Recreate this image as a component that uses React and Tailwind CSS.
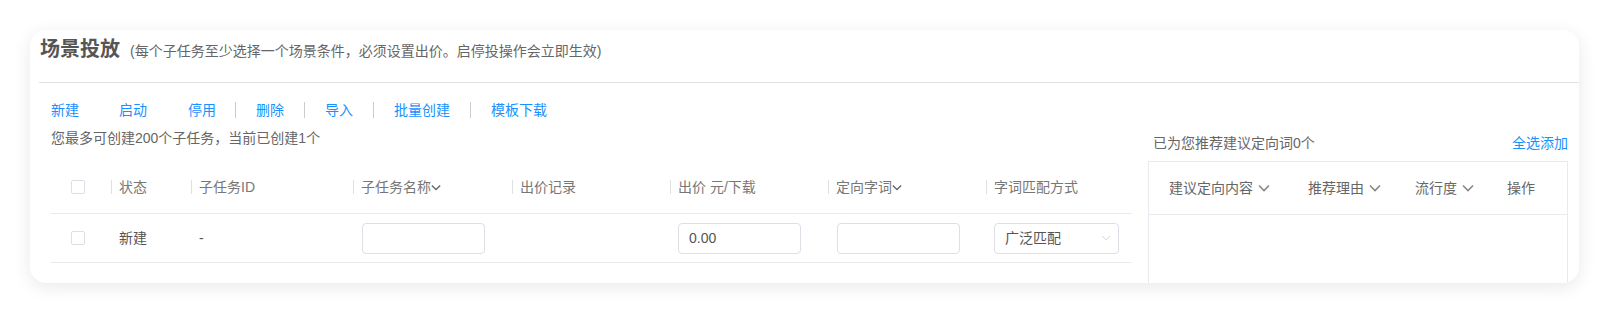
import React from "react";

const FONT = {
  fontFamily: '"Liberation Sans", "Noto Sans CJK SC", sans-serif',
};

const Chevron = ({ className = "", stroke = "#666", width = 1.4 }) => (
  <svg viewBox="0 0 12 8" className={className} fill="none">
    <path d="M1 1.5 L6 6.5 L11 1.5" stroke={stroke} strokeWidth={width} />
  </svg>
);

const Checkbox = () => (
  <span className="block w-[14px] h-[14px] border border-[#dcdfe6] rounded-[2px] bg-white" />
);

// column widths of the sub-task table, first one holds the checkbox
const columns = [
  { key: "check", width: "w-[60px]" },
  { key: "status", width: "w-[80px]", title: "状态" },
  { key: "id", width: "w-[162px]", title: "子任务ID" },
  { key: "name", width: "w-[159px]", title: "子任务名称", sort: true },
  { key: "history", width: "w-[158px]", title: "出价记录" },
  { key: "price", width: "w-[158px]", title: "出价 元/下载" },
  { key: "words", width: "w-[158px]", title: "定向字词", sort: true },
  { key: "match", width: "flex-1", title: "字词匹配方式" },
];

const actions = [
  { label: "新建", sep: false, pad: "pr-[19px]" },
  { label: "启动", sep: false, pad: "px-[20px]" },
  { label: "停用", sep: true, pad: "pl-[20px] pr-[19px]" },
  { label: "删除", sep: true, pad: "px-[20px]" },
  { label: "导入", sep: true, pad: "px-[20px]" },
  { label: "批量创建", sep: true, pad: "px-[20px]" },
  { label: "模板下载", sep: false, pad: "px-[20px]" },
];

const TextInput = ({ value = "" }) => (
  <div className="w-[123px] h-[31px] border border-[#dcdfe6] rounded-[4px] bg-white flex items-center pl-[10px] text-[14px] text-[#555]">
    {value}
  </div>
);

const App = () => {
  return (
    <div className="w-full h-[314px] bg-white pt-[30px] pl-[30px]" style={FONT}>
      <div className="w-[1549px] h-[253px] bg-white rounded-[16px] shadow-[0_4px_18px_rgba(0,0,0,0.09)] overflow-hidden">
        {/* header */}
        <div className="ml-[9px] h-[53px] border-b border-[#e2e2e2] pt-[5px] pl-px flex items-baseline">
          <span className="text-[20px] leading-[28px] font-bold text-[#555]">场景投放</span>
          <span className="ml-[10px] text-[14px] text-[#666]">
            (每个子任务至少选择一个场景条件，必须设置出价。启停投操作会立即生效)
          </span>
        </div>

        <div className="pl-[21px] pr-[11px] flex gap-[16px]">
          {/* left: toolbar + tasks table */}
          <div className="flex-1 min-w-0">
            <div className="mt-[17px] h-[20px] flex items-center text-[14px] text-[#1890ff]">
              {actions.map((a, i) => (
                <React.Fragment key={a.label}>
                  <span className={`${a.pad} cursor-pointer`}>{a.label}</span>
                  {i < actions.length - 1 && (
                    <span className={a.sep ? "w-px h-[16px] bg-[#cccccc]" : "w-px h-[16px]"} />
                  )}
                </React.Fragment>
              ))}
            </div>
            <div className="mt-[8px] h-[20px] leading-[20px] text-[14px] text-[#666]">
              您最多可创建200个子任务，当前已创建1个
            </div>

            <div className="mt-[13px]">
              <div className="h-[53px] flex items-center border-b border-[#e8eaf0] text-[14px] text-[#777]">
                {columns.map((c) =>
                  c.key === "check" ? (
                    <div key={c.key} className={`${c.width} pl-[20px]`}>
                      <Checkbox />
                    </div>
                  ) : (
                    <div key={c.key} className={`${c.width} flex items-center`}>
                      <span className="w-px h-[14px] bg-[#e0e0e0] mr-[7px]" />
                      <span>{c.title}</span>
                      {c.sort && <Chevron className="w-[10px] h-[7px]" stroke="#666" width={1.6} />}
                    </div>
                  )
                )}
              </div>
              <div className="h-[49px] flex items-center border-b border-[#e8eaf0] text-[14px] text-[#555]">
                <div className="w-[60px] pl-[20px]">
                  <Checkbox />
                </div>
                <div className="w-[80px] pl-[8px]">新建</div>
                <div className="w-[162px] pl-[8px]">-</div>
                <div className="w-[159px] pl-[9px]">
                  <TextInput />
                </div>
                <div className="w-[158px]" />
                <div className="w-[158px] pl-[8px]">
                  <TextInput value="0.00" />
                </div>
                <div className="w-[158px] pl-[9px]">
                  <TextInput />
                </div>
                <div className="flex-1 pl-[8px]">
                  <div className="w-[125px] h-[31px] border border-[#dcdfe6] rounded-[4px] flex items-center justify-between pl-[10px] pr-[7px]">
                    <span>广泛匹配</span>
                    <Chevron className="w-[10px] h-[6px]" stroke="#c0c4cc" width={1} />
                  </div>
                </div>
              </div>
            </div>
          </div>

          {/* right: recommended words */}
          <div className="w-[420px] shrink-0">
            <div className="mt-[50px] h-[20px] pl-[5px] flex items-center justify-between text-[14px]">
              <span className="text-[#666]">已为您推荐建议定向词0个</span>
              <span className="text-[#1890ff] cursor-pointer">全选添加</span>
            </div>
            <div className="mt-[8px] h-[200px] border border-[#e8eaf0]">
              <div className="h-[53px] flex items-center border-b border-[#e8eaf0] text-[14px] text-[#666]">
                <div className="w-[159px] pl-[20px] flex items-center gap-[5px]">
                  建议定向内容
                  <Chevron className="w-[12px] h-[8px]" stroke="#888" width={1.6} />
                </div>
                <div className="w-[107px] flex items-center gap-[5px]">
                  推荐理由
                  <Chevron className="w-[12px] h-[8px]" stroke="#888" width={1.6} />
                </div>
                <div className="w-[92px] flex items-center gap-[5px]">
                  流行度
                  <Chevron className="w-[12px] h-[8px]" stroke="#888" width={1.6} />
                </div>
                <div className="flex-1">操作</div>
              </div>
            </div>
          </div>
        </div>
      </div>
    </div>
  );
};

export default App;
